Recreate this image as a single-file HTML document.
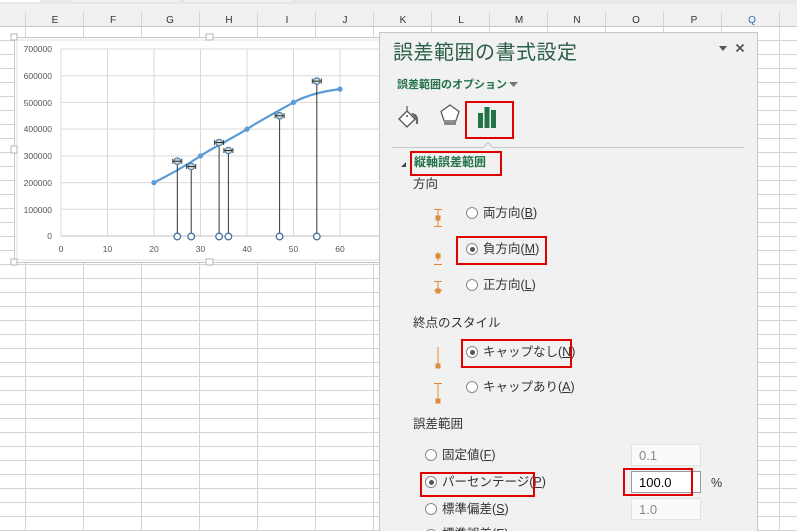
<!DOCTYPE html>
<html><head><meta charset="utf-8"><style>
*{margin:0;padding:0;box-sizing:border-box}
html,body{width:797px;height:531px;overflow:hidden}
body{background:#fff;font-family:"Liberation Sans","Noto Sans CJK JP",sans-serif;position:relative}
.abs{position:absolute}
.t{position:absolute;font-size:12.5px;color:#333;white-space:nowrap;line-height:16px}
.g{color:#217346;font-weight:bold}
.rb{position:absolute;border:2px solid #e00000}
.radio{position:absolute;width:12px;height:12px;border:1px solid #8a8a8a;border-radius:50%;background:#fff}
.radio.on::after{content:"";position:absolute;left:2.5px;top:2.5px;width:5px;height:5px;border-radius:50%;background:#555}
.inp{position:absolute;width:70px;height:22px;border:1px solid #e3e3e3;background:#fafafa;font-size:13px;color:#888;padding:3px 0 0 7px}
u{text-decoration:underline}
</style></head><body>
<svg class="abs" style="left:0;top:0" width="797" height="531">
<rect x="0" y="0" width="797" height="4" fill="#e8e8e8"/>
<rect x="0" y="0" width="40" height="2" fill="#fff"/>
<rect x="70" y="0" width="110" height="2" fill="#fff" stroke="#ccc" stroke-width=".5"/>
<rect x="183" y="0" width="110" height="2" fill="#fff" stroke="#ccc" stroke-width=".5"/>
<rect x="0" y="4" width="797" height="22" fill="#f0f0f0"/>
<line x1="0" y1="26.5" x2="797" y2="26.5" stroke="#c8c8c8"/>
<g stroke="#d4d4d4">
<line x1="0" y1="40.5" x2="797" y2="40.5"/><line x1="0" y1="54.5" x2="797" y2="54.5"/><line x1="0" y1="68.5" x2="797" y2="68.5"/><line x1="0" y1="82.5" x2="797" y2="82.5"/><line x1="0" y1="96.5" x2="797" y2="96.5"/><line x1="0" y1="110.5" x2="797" y2="110.5"/><line x1="0" y1="124.5" x2="797" y2="124.5"/><line x1="0" y1="138.5" x2="797" y2="138.5"/><line x1="0" y1="152.5" x2="797" y2="152.5"/><line x1="0" y1="166.5" x2="797" y2="166.5"/><line x1="0" y1="180.5" x2="797" y2="180.5"/><line x1="0" y1="194.5" x2="797" y2="194.5"/><line x1="0" y1="208.5" x2="797" y2="208.5"/><line x1="0" y1="222.5" x2="797" y2="222.5"/><line x1="0" y1="236.5" x2="797" y2="236.5"/><line x1="0" y1="250.5" x2="797" y2="250.5"/><line x1="0" y1="264.5" x2="797" y2="264.5"/><line x1="0" y1="278.5" x2="797" y2="278.5"/><line x1="0" y1="292.5" x2="797" y2="292.5"/><line x1="0" y1="306.5" x2="797" y2="306.5"/><line x1="0" y1="320.5" x2="797" y2="320.5"/><line x1="0" y1="334.5" x2="797" y2="334.5"/><line x1="0" y1="348.5" x2="797" y2="348.5"/><line x1="0" y1="362.5" x2="797" y2="362.5"/><line x1="0" y1="376.5" x2="797" y2="376.5"/><line x1="0" y1="390.5" x2="797" y2="390.5"/><line x1="0" y1="404.5" x2="797" y2="404.5"/><line x1="0" y1="418.5" x2="797" y2="418.5"/><line x1="0" y1="432.5" x2="797" y2="432.5"/><line x1="0" y1="446.5" x2="797" y2="446.5"/><line x1="0" y1="460.5" x2="797" y2="460.5"/><line x1="0" y1="474.5" x2="797" y2="474.5"/><line x1="0" y1="488.5" x2="797" y2="488.5"/><line x1="0" y1="502.5" x2="797" y2="502.5"/><line x1="0" y1="516.5" x2="797" y2="516.5"/><line x1="0" y1="530.5" x2="797" y2="530.5"/>
<line x1="25.5" y1="12" x2="25.5" y2="531"/><line x1="83.5" y1="12" x2="83.5" y2="531"/><line x1="141.5" y1="12" x2="141.5" y2="531"/><line x1="199.5" y1="12" x2="199.5" y2="531"/><line x1="257.5" y1="12" x2="257.5" y2="531"/><line x1="315.5" y1="12" x2="315.5" y2="531"/><line x1="373.5" y1="12" x2="373.5" y2="531"/><line x1="431.5" y1="12" x2="431.5" y2="531"/><line x1="489.5" y1="12" x2="489.5" y2="531"/><line x1="547.5" y1="12" x2="547.5" y2="531"/><line x1="605.5" y1="12" x2="605.5" y2="531"/><line x1="663.5" y1="12" x2="663.5" y2="531"/><line x1="721.5" y1="12" x2="721.5" y2="531"/><line x1="779.5" y1="12" x2="779.5" y2="531"/>
</g>
<g font-size="10" fill="#333" text-anchor="middle" font-family="Liberation Sans,sans-serif">
<text x="55" y="23">E</text><text x="113" y="23">F</text><text x="170" y="23">G</text><text x="229" y="23">H</text><text x="287" y="23">I</text><text x="345" y="23">J</text><text x="403" y="23">K</text><text x="461" y="23">L</text><text x="519" y="23">M</text><text x="577" y="23">N</text><text x="636" y="23">O</text><text x="694" y="23">P</text><text x="752" y="23" fill="#2f6fb5">Q</text>
</g>
<rect x="14.5" y="37.5" width="380" height="225" fill="#fff" stroke="#c8c8c8"/>
<rect x="17" y="40" width="375" height="220" fill="#fff" stroke="#e0e0e0"/>
<g fill="#fff" stroke="#b5b5b5"><rect x="11" y="34" width="6" height="6"/><rect x="206" y="34" width="7" height="6"/><rect x="11" y="146" width="6" height="7"/><rect x="11" y="259" width="6" height="6"/><rect x="206" y="259" width="7" height="6"/></g>
<g stroke="#d9d9d9">
<line x1="61" y1="49" x2="395" y2="49"/><line x1="61" y1="75.7" x2="395" y2="75.7"/><line x1="61" y1="102.4" x2="395" y2="102.4"/><line x1="61" y1="129.1" x2="395" y2="129.1"/><line x1="61" y1="155.9" x2="395" y2="155.9"/><line x1="61" y1="182.6" x2="395" y2="182.6"/><line x1="61" y1="209.3" x2="395" y2="209.3"/>
<line x1="61" y1="49" x2="61" y2="236"/><line x1="107.5" y1="49" x2="107.5" y2="236"/><line x1="154" y1="49" x2="154" y2="236"/><line x1="200.5" y1="49" x2="200.5" y2="236"/><line x1="247" y1="49" x2="247" y2="236"/><line x1="293.5" y1="49" x2="293.5" y2="236"/><line x1="340" y1="49" x2="340" y2="236"/>
</g>
<line x1="61" y1="236" x2="395" y2="236" stroke="#bfbfbf"/>
<g font-size="8.5" fill="#555" font-family="Liberation Sans,sans-serif" text-anchor="end">
<text x="52" y="52">700000</text><text x="52" y="79">600000</text><text x="52" y="106">500000</text><text x="52" y="132">400000</text><text x="52" y="159">300000</text><text x="52" y="186">200000</text><text x="52" y="213">100000</text><text x="52" y="239">0</text>
</g>
<g font-size="8.5" fill="#555" font-family="Liberation Sans,sans-serif" text-anchor="middle">
<text x="61" y="252">0</text><text x="107.5" y="252">10</text><text x="154" y="252">20</text><text x="200.5" y="252">30</text><text x="247" y="252">40</text><text x="293.5" y="252">50</text><text x="340" y="252">60</text>
</g>
<path d="M154 182.6 C175 172 190 163 200.5 155.9 S235 137 247 129.1 S280 110 293.5 102.4 S325 91 340 89.1" fill="none" stroke="#5b9bd5" stroke-width="2.2"/>
<g fill="#5b9bd5"><circle cx="154" cy="182.6" r="2.6"/><circle cx="200.5" cy="155.9" r="2.6"/><circle cx="247" cy="129.1" r="2.6"/><circle cx="293.5" cy="102.4" r="2.6"/><circle cx="340" cy="89.1" r="2.6"/></g>
<g stroke="#333" stroke-width="1">
<line x1="177.3" y1="161" x2="177.3" y2="236"/><line x1="191.2" y1="166.5" x2="191.2" y2="236"/><line x1="219.1" y1="142.5" x2="219.1" y2="236"/><line x1="228.4" y1="150.5" x2="228.4" y2="236"/><line x1="279.6" y1="115.8" x2="279.6" y2="236"/><line x1="316.8" y1="81.1" x2="316.8" y2="236"/>
</g>
<g fill="#c6d6d6" stroke="#41719c" stroke-width="1">
<circle cx="177.3" cy="161.2" r="3.3"/><circle cx="191.2" cy="166.5" r="3.3"/><circle cx="219.1" cy="142.5" r="3.3"/><circle cx="228.4" cy="150.5" r="3.3"/><circle cx="279.6" cy="115.8" r="3.3"/><circle cx="316.8" cy="81.1" r="3.3"/>
</g>
<g stroke="#333"><path d="M172.8 161.2h9M172.8 158.7v5M181.8 158.7v5M186.7 166.5h9M186.7 164v5M195.7 164v5M214.6 142.5h9M214.6 140v5M223.6 140v5M223.9 150.5h9M223.9 148v5M232.9 148v5M275.1 115.8h9M275.1 113.3v5M284.1 113.3v5M312.3 81.1h9M312.3 78.6v5M321.3 78.6v5"/></g>
<g fill="#fff" stroke="#41719c" stroke-width="1.3">
<circle cx="177.3" cy="236.5" r="3.3"/><circle cx="191.2" cy="236.5" r="3.3"/><circle cx="219.1" cy="236.5" r="3.3"/><circle cx="228.4" cy="236.5" r="3.3"/><circle cx="279.6" cy="236.5" r="3.3"/><circle cx="316.8" cy="236.5" r="3.3"/>
</g>
<rect x="379.5" y="32.5" width="378" height="510" fill="#f1f1f1" stroke="#c6c6c6"/>
<path d="M719 46h8l-4 5z" fill="#555"/>
<path d="M736.5 44.5l7 7M743.5 44.5l-7 7" stroke="#555" stroke-width="1.8"/>
<path d="M509 82h9l-4.5 5z" fill="#777"/>
<path d="M399 119l8-8 8 8-8 8z" fill="#fff" stroke="#555" stroke-width="1.3"/>
<path d="M407 111v-5" stroke="#555" stroke-width="1.2"/>
<circle cx="407" cy="116" r="1" fill="#555"/>
<path d="M411 113c5 0 8 3 7 11l-2 0c0-4-1-7-3-8z" fill="#666"/>
<path d="M450 105l9 6.5-3.2 9.5h-11.6l-3.2-9.5z" fill="#fff" stroke="#555" stroke-width="1.2"/>
<rect x="444" y="122" width="12" height="3" fill="#888"/>
<g fill="#217346"><rect x="478" y="113" width="5" height="15"/><rect x="484.5" y="107" width="5" height="21"/><rect x="491" y="110" width="5" height="18"/></g>
<path d="M392 147.5h91l5-5 5 5h251" fill="none" stroke="#c6c6c6"/>
<path d="M401 167l5-5v5z" fill="#444"/>
<g stroke="#e08a3c" stroke-width="1" fill="#e08a3c">
<path d="M434 209.5h8M438 209.5v17M434 226.5h8" fill="none"/><rect x="436" y="216" width="4" height="4"/>
<path d="M438 252v9M434 264.5h8" fill="none"/><rect x="436" y="254" width="4" height="4"/>
<path d="M434 281.5h8M438 281.5v9M434 290.5h8" fill="none"/><rect x="436" y="289" width="4" height="4"/>
<path d="M438 347v18" fill="none"/><rect x="436" y="364" width="4" height="4"/>
<path d="M434 383.5h8M438 383.5v16" fill="none"/><rect x="436" y="399" width="4" height="4"/>
</g>
</svg>

<div class="t" style="left:393px;top:40px;font-size:20px;line-height:26px;color:#2a5e46;letter-spacing:.5px">誤差範囲の書式設定</div>
<div class="t g" style="left:397px;top:78px;font-size:11px;line-height:14px">誤差範囲のオプション</div>
<div class="rb" style="left:465px;top:101px;width:49px;height:38px"></div>
<div class="t g" style="left:414px;top:154px;font-size:12px">縦軸誤差範囲</div>
<div class="rb" style="left:410px;top:151px;width:92px;height:25px"></div>
<div class="t" style="left:413px;top:176px">方向</div>

<div class="radio" style="left:466px;top:207px"></div><div class="t" style="left:483px;top:205px">両方向(<u>B</u>)</div>
<div class="radio on" style="left:466px;top:243px"></div><div class="t" style="left:483px;top:241px">負方向(<u>M</u>)</div>
<div class="rb" style="left:456px;top:236px;width:91px;height:29px"></div>
<div class="radio" style="left:466px;top:279px"></div><div class="t" style="left:483px;top:277px">正方向(<u>L</u>)</div>

<div class="t" style="left:413px;top:315px">終点のスタイル</div>
<div class="radio on" style="left:466px;top:346px"></div><div class="t" style="left:483px;top:344px">キャップなし(<u>N</u>)</div>
<div class="rb" style="left:461px;top:339px;width:111px;height:29px"></div>
<div class="radio" style="left:466px;top:381px"></div><div class="t" style="left:483px;top:379px">キャップあり(<u>A</u>)</div>

<div class="t" style="left:413px;top:416px">誤差範囲</div>
<div class="radio" style="left:425px;top:449px"></div><div class="t" style="left:442px;top:447px">固定値(<u>F</u>)</div>
<div class="inp" style="left:631px;top:444px">0.1</div>
<div class="radio on" style="left:425px;top:476px"></div><div class="t" style="left:442px;top:474px">パーセンテージ(<u>P</u>)</div>
<div class="rb" style="left:420px;top:472px;width:115px;height:25px"></div>
<div class="inp" style="left:631px;top:471px;border-color:#999;background:#fff;color:#000">100.0</div>
<div class="rb" style="left:623px;top:468px;width:70px;height:28px"></div>
<div class="t" style="left:711px;top:475px">%</div>
<div class="radio" style="left:425px;top:503px"></div><div class="t" style="left:442px;top:501px">標準偏差(<u>S</u>)</div>
<div class="inp" style="left:631px;top:498px">1.0</div>
<div class="radio" style="left:425px;top:529px"></div><div class="t" style="left:442px;top:526px">標準誤差(<u>E</u>)</div>
</body></html>
